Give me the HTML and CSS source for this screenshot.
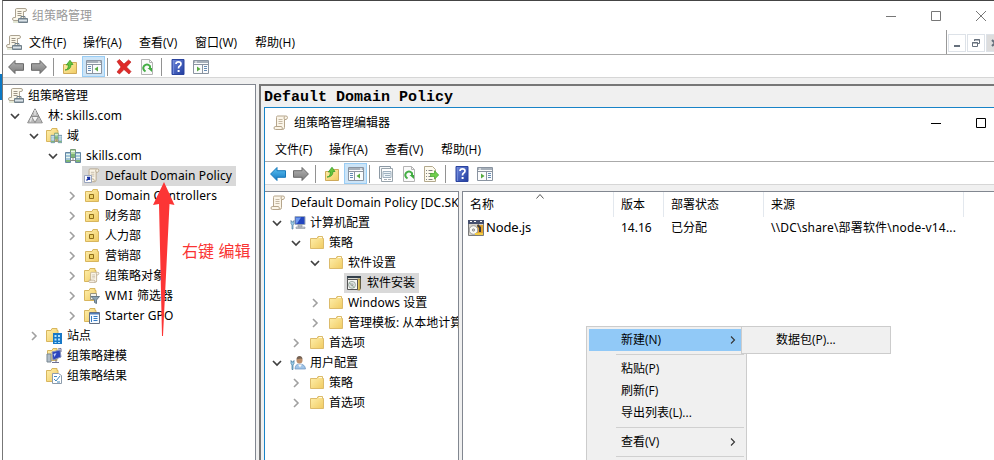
FILE: index.html
```html
<!DOCTYPE html>
<html lang="zh-CN">
<head>
<meta charset="utf-8">
<title>组策略管理</title>
<link rel="stylesheet" href="styles.css">
</head>
<body>
<svg class="defs" aria-hidden="true">
  <defs>
    <linearGradient id="gold" x1="0" y1="0" x2="1" y2="1"><stop offset="0" stop-color="#fff0ae"/><stop offset="1" stop-color="#f0cb62"/></linearGradient>
    <linearGradient id="help" x1="0" y1="0" x2="1" y2="1"><stop offset="0" stop-color="#6f87dc"/><stop offset="1" stop-color="#1f3c9e"/></linearGradient>
    <linearGradient id="blue" x1="0" y1="0" x2="0" y2="1"><stop offset="0" stop-color="#5cc3f2"/><stop offset="1" stop-color="#1678c2"/></linearGradient>
    <linearGradient id="grey" x1="0" y1="0" x2="0" y2="1"><stop offset="0" stop-color="#b4b4b4"/><stop offset="1" stop-color="#7c7c7c"/></linearGradient>
    <symbol id="scroll" viewBox="0 0 16 16"><path d="M4.500 1h8.500q1.500 0 1.500 1.500T13 4.500H11.500v8q0 2-2 2H2.500Q1 14.500 1 13t1.500-1.500h1V2.500q0-1.500 1-1.500z" fill="#fbf5e8" stroke="#b5a58b"/><path d="M11.500 4.500q-1-1.500 0-3M2.500 11.500h6q1.500 1.500.5 3" fill="none" stroke="#b5a58b"/><path d="M5.500 4.500h4M5.500 6.500h4M5.500 8.500h4" stroke="#c4b8a4" fill="none"/></symbol>
    <symbol id="gpmc" viewBox="0 0 16 16"><path d="M4.500.5H13q1.500 0 1.500 1.500T13 3.500H11.500v9H2Q.5 12.500.5 11T2 9.500h1.500V2q0-1.500 1-1.500z" fill="#fbf7ea" stroke="#aca391"/><path d="M5.500 3.500h4M5.500 5.500h4M5.500 7.500h4" stroke="#9d9587" fill="none"/><path d="M6.500 10.500h9v4h-9z" fill="#a8b4bd" stroke="#71808a"/><path d="M9 10V8.500h4V10" fill="none" stroke="#71808a"/><path d="M7 12.500h8" stroke="#dbe3e8"/><path d="M1 13.500h5v1H1z" fill="#c4cda9"/></symbol>
    <symbol id="folder" viewBox="0 0 16 16"><path d="M1.500 3.500H8l1-2h4.500v2h1v10h-13z" fill="url(#gold)" stroke="#dcbb6b"/><path d="M10 2.500h3" stroke="#fffbe4"/></symbol>
    <symbol id="ou" viewBox="0 0 16 16"><path d="M1.500 3.500H8l1-2h4.500v2h1v10h-13z" fill="url(#gold)" stroke="#d8b65e"/><path d="M5.500 6.500h4v4h-4z" fill="#ecd064" stroke="#8f6e1c"/></symbol>
    <symbol id="forest" viewBox="0 0 16 16"><path d="M8 .8 15.300 14.800H.7z" fill="#d8d8d8" stroke="#7e7e7e"/><path d="M8 1.500 11.500 8.500h-7zM4.500 8.500 8 14.500H1.200zM11.500 8.500l3.200 6H8z" fill="#b9b9b9"/><path d="m4.500 8.500 3.500 6 3.500-6z" fill="#f4f4f4" stroke="#777" stroke-width=".8"/><path d="M8 2v5M4.500 9.500l-1 4" stroke="#f5f5f5"/></symbol>
    <symbol id="towers" viewBox="0 0 16 16"><path d="M5.500 1.500h5v8h-5z" fill="#b5d8a2" stroke="#789a78"/><path d="M.5 4.500h5v10h-5zM10.500 4.500h5v10h-5z" fill="#a3c6da" stroke="#6687a2"/><path d="M6 3.500h4M1 6.500h4M11 6.500h4M1 9.500h4M11 9.500h4" stroke="#e9f7ee"/><path d="M1 12h4v2H1zM11 12h4v2h-4zM6 6h4v3H6z" fill="#7eb676"/><path d="M8 10v3M5 12.500h6" stroke="#888"/></symbol>
    <symbol id="domains" viewBox="0 0 16 16"><path d="M.5 2.500H5l1-2h5v2h1v11H.5z" fill="url(#gold)" stroke="#d8b65e"/><g transform="translate(4.500 4) scale(.74)"><use href="#towers" width="16" height="16"/></g></symbol>
    <symbol id="link" viewBox="0 0 16 16"><g transform="translate(2 0) scale(.88 .95)"><use href="#scroll" width="16" height="16"/></g><path d="M.5 7.500h7v7h-7z" fill="#fff" stroke="#99a5bd"/><path d="M2.500 12.500 5.500 9.500M3 9.500h2.500V12" stroke="#1731a4" stroke-width="1.400" fill="none"/></symbol>
    <symbol id="gpos" viewBox="0 0 16 16"><path d="M.5 2.500H5l1-2h5v2h1v11H.5z" fill="url(#gold)" stroke="#d8b65e"/><g transform="translate(4 3.500) scale(.75)"><use href="#scroll" width="16" height="16"/></g></symbol>
    <symbol id="wmi" viewBox="0 0 16 16"><path d="M.5 2.500H5l1-2h5v2h1v10H.5z" fill="url(#gold)" stroke="#d8b65e"/><path d="M6.500 5.500h6v6h-6z" fill="#f4f4ed" stroke="#999580"/><path d="M7 8.500h8.500L12.500 12v3.500l-2-1V12z" fill="#8ba2b3" stroke="#667987"/></symbol>
    <symbol id="starter" viewBox="0 0 16 16"><path d="M.5 2.500H5l1-2h5v2h1v11H.5z" fill="url(#gold)" stroke="#d8b65e"/><path d="M5.500 4.500h10v11h-10z" fill="#f5faff" stroke="#626f83"/><path d="M6 5h9v1.500H6z" fill="#527fb8"/><path d="M9.500 8.500h4M9.500 10.500h4M9.500 12.500h4M7.500 8v6" stroke="#357bc3"/></symbol>
    <symbol id="sites" viewBox="0 0 16 16"><path d="M.5 2.500H5l1-2h5v2h1v11H.5z" fill="url(#gold)" stroke="#d8b65e"/><path d="M7 5h9v11H7z" fill="#1778c7"/><path d="M8.500 7h2v2h-2zM12 7h2v2h-2zM8.500 10.500h2v2h-2zM12 10.500h2v2h-2zM8.500 14h2v1h-2zM12 14h2v1h-2z" fill="#b3e5ff"/></symbol>
    <symbol id="model" viewBox="0 0 16 16"><path d="M1.500 2.500H6l1-2h4v12H1.500z" fill="url(#gold)" stroke="#d8b65e"/><path d="M1 6h4v8H1z" fill="#b2bec8" stroke="#788792"/><path d="m6 4 8-2 1 7-8 3z" fill="#2b44bd" stroke="#8591ba"/><path d="m7.500 6 3-1-2 4z" fill="#c2d3ff"/><path d="M6 14.500h7M10 11v3M12 1l3-.5V4" stroke="#6e7192" fill="none"/></symbol>
    <symbol id="result" viewBox="0 0 16 16"><path d="M.5 2.500H5l1-2h5v2h1v11H.5z" fill="url(#gold)" stroke="#d8b65e"/><path d="M6.500 5.500h6l3 2v8h-9z" fill="#fff" stroke="#8c9cac"/><path d="m8 11 2 2 4-5M8 8.500h3M11 14h3" stroke="#4088bd" fill="none"/></symbol>
    <symbol id="back" viewBox="0 0 16 16"><path d="M.6 8 7 1.500v3.200h8.500v6.600H7v3.200z" stroke-width="1"/></symbol>
    <symbol id="up" viewBox="0 0 16 16"><path d="M1.500 5.500h7l1-2h5v11h-13z" fill="url(#gold)" stroke="#ceaa5a"/><path d="M3 11q3 .2 3.500-5H4.300L8 1.200 11 5.500H9Q9 11 3 11z" fill="#65c33c" stroke="#2b9824" stroke-width=".7"/></symbol>
    <symbol id="pane" viewBox="0 0 16 16"><path d="M.5 1.500h15v13H.5z" fill="#fbfcfd" stroke="#8a94a1"/><path d="M1 2h14v2H1z" fill="#a7b0ba"/><path d="M12 3h2" stroke="#fff"/><path d="M.5 5.500h15M6.500 5.500v9" stroke="#8a94a1"/><path d="M2 7.500h3M2 9.500h3M2 11.500h3" stroke="#658bb4"/><path d="M12 7.500v5L8.500 10z" fill="#56ab3f"/></symbol>
    <symbol id="delete" viewBox="0 0 16 16"><path d="m1 2.500 2.500-2L8 5l4.500-4L15 3l-4.500 5 4.500 4.500-2 2.500L8 10.500 3.500 15 1 13l4-5z" fill="#df2b29" stroke="#b91a1a" stroke-width=".6"/></symbol>
    <symbol id="refresh" viewBox="0 0 16 16"><path d="M2.500.5h8l3 3v12h-11z" fill="#fafafa" stroke="#b4b4b4"/><path d="M10.500.5v3h3" fill="none" stroke="#b4b4b4"/><path d="M6.500 12.500Q3 10 5 7q3-3.200 6 .2v2.300" fill="none" stroke="#45ae45" stroke-width="2"/><path d="M8.500 9H13v4z" fill="#3daa3d"/></symbol>
    <symbol id="question" viewBox="0 0 16 16"><path d="M2 .5h12v15H2z" fill="url(#help)" stroke="#2a439e"/><path d="M3.500 1v14" stroke="#6f89d8"/><path d="M6 5q0-2.200 2.500-2.200T11 5q0 1.200-1.300 2T8.500 9.500" fill="none" stroke="#fff" stroke-width="1.700"/><path d="M7.600 11h2v2h-2z" fill="#fff"/></symbol>
    <symbol id="props" viewBox="0 0 16 16"><path d="M1.500.5h11v12h-11z" fill="#f6f8f9" stroke="#8c99a4"/><path d="M3.500 2.500h11v13h-11z" fill="#fff" stroke="#9aa5ad"/><path d="M5 5.500h8v6H5zM5.500 7.500h7M7 9.500h5" fill="#edf4f8" stroke="#9fb1bf"/><path d="M6 13.500h3M10 13.500h3" stroke="#a9afb5"/></symbol>
    <symbol id="export" viewBox="0 0 16 16"><path d="M1.500.5h8l3 3v12h-11z" fill="#fdfaee" stroke="#b3a98d"/><path d="M3 4.500h1M5.500 4.500h4M3 7.500h1M5.500 7.500h4M3 10.500h1M5.500 10.500h3M3 13.500h1M5.500 13.500h4" stroke="#828282"/><path d="M7.500 7.500h4V4.700L15.700 9l-4.200 4.200v-2.700h-4z" fill="#70ce4c" stroke="#40a52b" stroke-width=".7"/></symbol>
    <symbol id="pc" viewBox="0 0 16 16"><path d="M5 1.500h10v8H5z" fill="#2346bf" stroke="#9ba8bb"/><path d="M6 2.500h5l-4 6H6z" fill="#6f9bef"/><path d="M8 10h4v2H8zM6 12h9v1.500H6z" fill="#c8cdd4" stroke="#8a929c" stroke-width=".6"/><path d="M1 5.500 2 7h1l1-1.500v3L3 10v4H2v-4L1 8.500z" fill="#a2d3ef" stroke="#4b7c9e" stroke-width=".7"/></symbol>
    <symbol id="user" viewBox="0 0 16 16"><path d="M5 14q0-5 4.500-5 5.500 0 6 5z" fill="#9fc4e8" stroke="#6a93bd" stroke-width=".7"/><path d="m8 9.500 2 3 2-3z" fill="#f6f6f6"/><circle cx="9.500" cy="5.500" r="3" fill="#bd8f6b"/><path d="M6.500 4.500q0-3.500 3-3.500t3 3.500L11 3.500 8 4z" fill="#766253"/><path d="M1 5.500 2 7h1l1-1.500v3L3 10v4.500H2V10L1 8.500z" fill="#a2d3ef" stroke="#39729a" stroke-width=".7"/></symbol>
    <symbol id="soft" viewBox="0 0 16 16"><path d="M1.500 1.500h13v12h-13z" fill="#d8d8d0" stroke="#4d5355"/><path d="M1 1h14v2H1z" fill="#35404b"/><path d="M11.500 4H14v11h-2.500z" fill="#e1c760" stroke="#8a7126" stroke-width=".7"/><path d="M1.500 4.500h10v10h-10z" fill="#f7f7f5" stroke="#555"/><circle cx="6" cy="9.800" r="3.500" fill="#dfe5e2" stroke="#84918a" stroke-width=".7"/><path d="m6 9.800-3-2M6 9.800l2 3" stroke="#79a684" stroke-width=".8"/><circle cx="6" cy="9.800" r="1" fill="#fff" stroke="#666" stroke-width=".6"/></symbol>
    <symbol id="package" viewBox="0 0 16 16"><path d="M.5.5h15v15H.5z" fill="#d8d4cb" stroke="#797979"/><path d="M0 0h16v4H0z" fill="#46506e"/><path d="M2 1.500h2M6 1.500h2M12 1.500h2" stroke="#fff"/><path d="M9 5h6v10H9z" fill="#e3a32b"/><path d="m10 4 3 3v5h-2V8L9 6z" fill="#3d3a3d"/><circle cx="5.500" cy="10" r="4.300" fill="#fafaf5" stroke="#999"/><circle cx="5.500" cy="10" r="1.200" fill="#ccc" stroke="#666" stroke-width=".6"/><path d="M7 14h8" stroke="#f3cc44" stroke-width="2"/></symbol>
    <symbol id="down" viewBox="0 0 10 10"><path d="m1 3 4 4 4-4" fill="none" stroke="#404040" stroke-width="1.700"/></symbol>
    <symbol id="right" viewBox="0 0 10 10"><path d="m3 1 4 4-4 4" fill="none" stroke="#a0a0a0" stroke-width="1.600"/></symbol>
    <symbol id="more" viewBox="0 0 10 10"><path d="m3 1.500 3.500 3.500L3 8.500" fill="none" stroke="#333" stroke-width="1.100"/></symbol>
  </defs>
</svg>

<div class="desktop">
  <div class="edge"></div>
  <main class="window">
    <header class="title">
      <svg class="ico"><use href="#gpmc"/></svg><span>组策略管理</span>
      <div class="controls">
        <svg viewBox="0 0 10 10"><path d="M0 5.500h10"/></svg>
        <svg viewBox="0 0 10 10"><path d="M.5.5h9v9h-9z"/></svg>
        <svg viewBox="0 0 10 10"><path d="m0 0 10 10M10 0 0 10"/></svg>
      </div>
    </header>
    <nav class="menu">
      <svg class="ico"><use href="#gpmc"/></svg>
      <span class="m-file">文件(F)</span><span class="m-act">操作(A)</span><span class="m-view">查看(V)</span><span class="m-win">窗口(W)</span><span>帮助(H)</span>
      <div class="mdi">
        <i><svg viewBox="0 0 10 10"><path d="M2 8h6" stroke-width="2"/></svg></i>
        <i><svg viewBox="0 0 10 10"><path d="M3.500 3V1.500h5v4H7M1.500 4.500h5v4h-5zM3 2h6M1 5h6"/></svg></i>
        <i class="close"><svg viewBox="0 0 10 10"><path d="m2 2 6 6M8 2 2 8" stroke-width="2"/></svg></i>
      </div>
    </nav>
    <div class="tools">
      <svg class="ico arrow-off"><use href="#back"/></svg>
      <svg class="ico arrow-off flip"><use href="#back"/></svg>
      <b></b>
      <svg class="ico"><use href="#up"/></svg>
      <span class="on"><svg class="ico"><use href="#pane"/></svg></span>
      <b class="tight"></b>
      <svg class="ico"><use href="#delete"/></svg>
      <svg class="ico"><use href="#refresh"/></svg>
      <b></b>
      <svg class="ico"><use href="#question"/></svg>
      <svg class="ico flip"><use href="#pane"/></svg>
    </div>
    <div class="body">
      <section class="tree outer">
        <div class="row"><svg class="ico"><use href="#gpmc"/></svg><span>组策略管理</span></div>
        <div class="row d1"><svg class="chev"><use href="#down"/></svg><svg class="ico"><use href="#forest"/></svg><span>林: <span class="wide">skills.com</span></span></div>
        <div class="row d2"><svg class="chev"><use href="#down"/></svg><svg class="ico"><use href="#domains"/></svg><span>域</span></div>
        <div class="row d3"><svg class="chev"><use href="#down"/></svg><svg class="ico"><use href="#towers"/></svg><span class="wide">skills.com</span></div>
        <div class="row d4"><i class="chev"></i><div class="pick"><svg class="ico"><use href="#link"/></svg><span class="wide">Default Domain Policy</span></div></div>
        <div class="row d4"><svg class="chev"><use href="#right"/></svg><svg class="ico"><use href="#ou"/></svg><span class="wide">Domain Controllers</span></div>
        <div class="row d4"><svg class="chev"><use href="#right"/></svg><svg class="ico"><use href="#ou"/></svg><span>财务部</span></div>
        <div class="row d4"><svg class="chev"><use href="#right"/></svg><svg class="ico"><use href="#ou"/></svg><span>人力部</span></div>
        <div class="row d4"><svg class="chev"><use href="#right"/></svg><svg class="ico"><use href="#ou"/></svg><span>营销部</span></div>
        <div class="row d4"><svg class="chev"><use href="#right"/></svg><svg class="ico"><use href="#gpos"/></svg><span>组策略对象</span></div>
        <div class="row d4"><svg class="chev"><use href="#right"/></svg><svg class="ico"><use href="#wmi"/></svg><span><span class="wmi">WMI </span>筛选器</span></div>
        <div class="row d4"><svg class="chev"><use href="#right"/></svg><svg class="ico"><use href="#starter"/></svg><span class="wide">Starter GPO</span></div>
        <div class="row d2"><svg class="chev"><use href="#right"/></svg><svg class="ico"><use href="#sites"/></svg><span>站点</span></div>
        <div class="row d2"><i class="chev"></i><svg class="ico"><use href="#model"/></svg><span>组策略建模</span></div>
        <div class="row d2"><i class="chev"></i><svg class="ico"><use href="#result"/></svg><span>组策略结果</span></div>
      </section>
      <section class="detail">
        <h1>Default Domain Policy</h1>
        <div class="editor">
          <header class="title">
            <svg class="ico"><use href="#scroll"/></svg><span>组策略管理编辑器</span>
            <div class="controls">
              <svg viewBox="0 0 10 10"><path d="M0 5.500h10"/></svg>
              <svg viewBox="0 0 10 10"><path d="M.5.5h9v9h-9z"/></svg>
            </div>
          </header>
          <nav class="menu"><span class="m-file">文件(F)</span><span class="m-act">操作(A)</span><span class="m-view">查看(V)</span><span>帮助(H)</span></nav>
          <div class="tools">
            <svg class="ico arrow-on"><use href="#back"/></svg>
            <svg class="ico arrow-off flip"><use href="#back"/></svg>
            <b></b>
            <svg class="ico"><use href="#up"/></svg>
            <span class="on"><svg class="ico"><use href="#pane"/></svg></span>
            <b class="tight"></b>
            <svg class="ico"><use href="#props"/></svg>
            <svg class="ico"><use href="#refresh"/></svg>
            <svg class="ico near"><use href="#export"/></svg>
            <b></b>
            <svg class="ico"><use href="#question"/></svg>
            <svg class="ico flip"><use href="#pane"/></svg>
          </div>
          <div class="body">
            <section class="tree inner">
              <div class="row"><svg class="ico"><use href="#scroll"/></svg><span class="root">Default Domain Policy [DC.SK</span></div>
              <div class="row d1"><svg class="chev"><use href="#down"/></svg><svg class="ico"><use href="#pc"/></svg><span>计算机配置</span></div>
              <div class="row d2"><svg class="chev"><use href="#down"/></svg><svg class="ico"><use href="#folder"/></svg><span>策略</span></div>
              <div class="row d3"><svg class="chev"><use href="#down"/></svg><svg class="ico"><use href="#folder"/></svg><span>软件设置</span></div>
              <div class="row d4"><i class="chev"></i><div class="pick"><svg class="ico"><use href="#soft"/></svg><span>软件安装</span></div></div>
              <div class="row d3"><svg class="chev"><use href="#right"/></svg><svg class="ico"><use href="#folder"/></svg><span><span class="wide">Windows </span>设置</span></div>
              <div class="row d3"><svg class="chev"><use href="#right"/></svg><svg class="ico"><use href="#folder"/></svg><span>管理模板: 从本地计算</span></div>
              <div class="row d2"><svg class="chev"><use href="#right"/></svg><svg class="ico"><use href="#folder"/></svg><span>首选项</span></div>
              <div class="row d1"><svg class="chev"><use href="#down"/></svg><svg class="ico"><use href="#user"/></svg><span>用户配置</span></div>
              <div class="row d2"><svg class="chev"><use href="#right"/></svg><svg class="ico"><use href="#folder"/></svg><span>策略</span></div>
              <div class="row d2"><svg class="chev"><use href="#right"/></svg><svg class="ico"><use href="#folder"/></svg><span>首选项</span></div>
            </section>
            <section class="list">
              <div class="cols head">
                <span>名称<svg class="sort" viewBox="0 0 8 5"><path d="m.5 4.500 3.500-4 3.500 4"/></svg></span><span>版本</span><span>部署状态</span><span>来源</span>
              </div>
              <div class="cols">
                <span class="name"><svg class="ico"><use href="#package"/></svg><span>Node.js</span></span><span>14.16</span><span>已分配</span><span class="path">\\DC\share\部署软件\node-v14...</span>
              </div>
            </section>
          </div>
        </div>
      </section>
    </div>
  </main>
</div>

<div class="popup context">
  <div class="item hot"><span>新建(N)</span><svg class="chev"><use href="#more"/></svg></div>
  <hr>
  <div class="item">粘贴(P)</div>
  <div class="item">刷新(F)</div>
  <div class="item">导出列表(L)...</div>
  <hr>
  <div class="item"><span>查看(V)</span><svg class="chev"><use href="#more"/></svg></div>
  <hr>
</div>
<div class="popup submenu"><div class="item">数据包(P)...</div></div>

<svg class="pointer" viewBox="0 0 22 154"><path d="M11 0 21.500 23 16.500 22 10 154 9 154 6 22 0 23z"/></svg>
<div class="note">右键 编辑</div>
</body>
</html>
```

FILE: styles.css
```css
* { box-sizing: border-box; }
body {
  margin: 0;
  width: 994px;
  height: 460px;
  overflow: hidden;
  position: relative;
  background: #fff;
  color: #000;
  font: 12px/20px "Noto Sans", "Noto Sans CJK SC", sans-serif;
  white-space: nowrap;
}
svg { display: block; flex: none; }
.defs { position: absolute; width: 0; height: 0; }
.ico { width: 16px; height: 16px; flex: none; }
.flip { transform: scaleX(-1); }

.desktop { display: flex; height: 460px; }
.edge { width: 2px; background: linear-gradient(#fff 74px, #0a78c4 74px, #0a78c4 100px, #fff 100px); }
.window {
  flex: 1;
  min-width: 0;
  display: flex;
  flex-direction: column;
  border: solid #777;
  border-width: 1px 0 0 1px;
  border-top-color: #444;
}

.title { display: flex; align-items: center; flex: none; height: 29px; padding-left: 9px; color: #999; }
.title > span { margin-left: 4px; }
.controls { display: flex; gap: 35px; margin-left: auto; padding-right: 8px; }
.controls svg { width: 10px; height: 10px; fill: none; stroke: #777; }
.window > .title .controls { padding-right: 7px; margin-right: 1px; }

.menu { display: flex; align-items: center; flex: none; height: 25px; padding-left: 3px; border-bottom: 1px solid #aaa; font-family: "Open Sans", "Noto Sans CJK SC", sans-serif; }
.menu > .ico { margin-right: 7px; margin-top: 1px; }
.menu > span { padding-top: 2px; }
.m-file { width: 54px; }
.m-act { width: 56px; }
.m-view { width: 56px; }
.m-win { width: 60px; }
.mdi { display: flex; gap: 1px; align-self: stretch; width: 48px; margin-left: auto; padding: 4px 0 2px 1px; border-left: 1px solid #999; overflow: hidden; }
.mdi i { display: grid; place-items: center; flex: none; width: 18px; height: 18px; border: 1px solid #dde2e8; }
.mdi i.close { background: #ddd; }
.mdi svg { width: 10px; height: 10px; fill: none; stroke: #66707c; }

.tools { display: flex; align-items: center; flex: none; height: 23px; padding: 1px 0 0 5px; border-bottom: 1px solid #d6d6d6; }
.tools .ico { margin: 1px 7px 0 0; }
.tools b { width: 1px; height: 18px; margin: 0 8px 0 -1px; background: #929292; }
.tools .on { display: grid; place-items: center; width: 23px; height: 21px; margin: 0 2px 0 -3px; background: #cce4f7; border: 1px solid #99cdf5; }
.tools .on .ico { margin: 1px 0 0; }
.tools b.tight { margin: 0 8px 0 0; }
.arrow-off { fill: url(#grey); stroke: #686868; }
.arrow-on { fill: url(#blue); stroke: #1878b9; }

.body { flex: 1; display: flex; min-height: 0; background: #f0f0f0; padding-top: 6px; }
.tree { flex: none; background: #fff; overflow: hidden; border: solid #828790; border-width: 1px 1px 0 0; }
.outer { width: 253px; margin-right: 3px; padding: 1px 0 0 5px; }
.row { display: flex; align-items: center; height: 20px; }
.row .ico { margin-right: 4px; }
.chev { width: 10px; height: 10px; margin-right: 7px; flex: none; }
.d1 { padding-left: 2px; }
.d2 { padding-left: 21px; }
.d3 { padding-left: 40px; }
.d4 { padding-left: 59px; }
.outer .row .chev + .ico { margin-right: 5px; }
.pick { display: flex; align-items: center; height: 20px; margin-left: -2px; padding: 0 4px 0 2px; background: #d9d9d9; }
.outer .pick .ico { margin-right: 5px; }
.wide { letter-spacing: .12px; }
.wmi { letter-spacing: .7px; }

.detail { flex: 1; min-width: 0; display: flex; flex-direction: column; padding-left: 3px; border: solid #777; border-width: 2px 0 0 2px; }
h1 { flex: none; margin: 0; height: 21px; font: bold 15px/24px "Liberation Mono", monospace; }
.editor { flex: 1; display: flex; flex-direction: column; min-height: 0; background: #fff; border: solid #1883c7; border-width: 1px 0 0 1px; }
.editor .title { height: 29px; padding-left: 8px; color: #000; }
.editor .title > span { margin-left: 5px; }
.editor .controls svg { stroke: #000; }
.editor .menu { padding-left: 10px; }
.editor .near { margin-left: -1px; }
.editor .body { padding-top: 6px; }
.inner { width: 194px; margin-right: 3px; padding: 1px 0 0 5px; }
.inner .chev { margin-right: 8px; }
.inner .pick { margin-left: -3px; }
.inner .row .pick .ico { margin-right: 5px; }
.root { padding-left: 1px; letter-spacing: .09px; }

.list { flex: 1; min-width: 0; background: #fff; border: solid #828790; border-width: 1px 0 0 1px; }
.cols { display: grid; grid-template-columns: 151px 50px 100px 200px; height: 24px; line-height: 24px; }
.cols > span { padding-left: 7px; }
.head { line-height: 25px; }
.head > span { position: relative; border-right: 1px solid #e3e8ee; }
.cols .name { display: flex; align-items: center; gap: 2px; padding-left: 5px; font-size: 13px; }
.name > span { height: 24px; line-height: 22px; letter-spacing: -.15px; }
.path { letter-spacing: .18px; }
.sort { position: absolute; left: 73px; top: 2px; width: 8px; height: 5px; fill: none; stroke: #555; }

.popup { position: absolute; background: #f0f0f0; border: 1px solid #ccc; font-family: "Open Sans", "Noto Sans CJK SC", sans-serif; }
.context { left: 586px; top: 326px; width: 161px; height: 140px; padding: 2px; }
.item { display: flex; align-items: center; justify-content: space-between; height: 22px; padding-left: 32px; }
.item .chev { margin-right: 6px; }
.hot { background: #91c9f7; }
.popup hr { height: 1px; margin: 3px 0 3px 27px; border: 0; background: #d0d0d0; }
.submenu { left: 741px; top: 326px; width: 150px; height: 28px; padding: 2px; }
.pointer { position: absolute; left: 153px; top: 182px; width: 22px; height: 154px; fill: #fc3535; }
.note { position: absolute; left: 182px; top: 240px; color: #fa3434; font-size: 16px; line-height: 22px; letter-spacing: .1px; }
```
